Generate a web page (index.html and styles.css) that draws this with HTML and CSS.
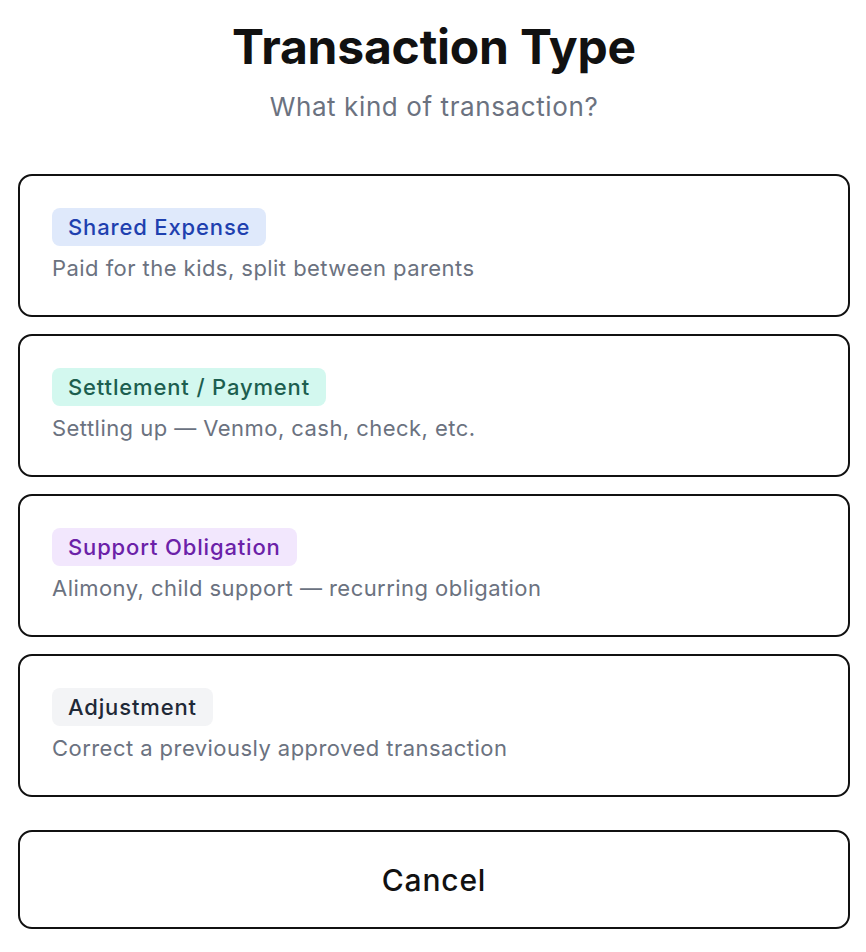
FILE: index.html
```html
<!DOCTYPE html>
<html lang="en">
    <head>
        <meta charset="UTF-8">
        <meta name="viewport" content="width=device-width, initial-scale=1.0">
        <title>Transaction Type</title>
        <link rel="stylesheet" href="styles.css">
    </head>
    <body>
        <div class="sheet">
            <h2 class="title">Transaction Type</h2>
            <p class="subtitle">What kind of transaction?</p>
            <div class="options">
                <button class="option">
                    <span class="badge badge-blue">Shared Expense</span>
                    <span class="desc">Paid for the kids, split between parents</span>
                </button>
                <button class="option">
                    <span class="badge badge-green">Settlement / Payment</span>
                    <span class="desc">Settling up — Venmo, cash, check, etc.</span>
                </button>
                <button class="option">
                    <span class="badge badge-purple">Support Obligation</span>
                    <span class="desc">Alimony, child support — recurring obligation</span>
                </button>
                <button class="option">
                    <span class="badge badge-gray">Adjustment</span>
                    <span class="desc">Correct a previously approved transaction</span>
                </button>
            </div>
            <button class="cancel">Cancel</button>
        </div>
    </body>
</html>
```

FILE: styles.css
```css
body {
    font-family: Inter, "Noto Sans", sans-serif;
    background-color: #ffffff;
    color: #111111;
    margin: 0;
    padding: 0;
}
.sheet {
    padding: 18px 16px 20px 18px;
    display: flex;
    flex-direction: column;
}
.title {
    margin: 0;
    text-align: center;
    font-size: 48px;
    line-height: 58px;
    font-weight: 700;
    letter-spacing: -0.2px;
    color: #111111;
}
.subtitle {
    margin: 14px 0 0 0;
    text-align: center;
    font-size: 26px;
    line-height: 34px;
    letter-spacing: 0.6px;
    color: #6b7280;
}
.options {
    display: flex;
    flex-direction: column;
    gap: 17px;
    margin-top: 50px;
}
.option {
    font-family: inherit;
    display: flex;
    flex-direction: column;
    align-items: flex-start;
    gap: 7px;
    text-align: left;
    background: #ffffff;
    border: 2px solid #111111;
    border-radius: 14px;
    padding: 32px;
    height: 143px;
    box-sizing: border-box;
    cursor: pointer;
}
.badge {
    display: inline-block;
    font-size: 22px;
    line-height: 30px;
    font-weight: 500;
    letter-spacing: 0.85px;
    padding: 4px 16px;
    border-radius: 8px;
}
.badge-blue {
    background-color: #dfe9fb;
    color: #1e40af;
}
.badge-green {
    background-color: #d3f8ef;
    color: #1c5e4f;
}
.badge-purple {
    background-color: #f2e7fd;
    color: #6b21a8;
}
.badge-gray {
    background-color: #f3f4f6;
    color: #1f2937;
}
.desc {
    font-size: 22px;
    line-height: 30px;
    letter-spacing: 0.45px;
    color: #6b7280;
}
.cancel {
    font-family: inherit;
    margin-top: 33px;
    height: 99px;
    background: #ffffff;
    border: 2px solid #111111;
    border-radius: 14px;
    font-size: 30px;
    font-weight: 500;
    letter-spacing: 0.8px;
    color: #111111;
    cursor: pointer;
}
```
